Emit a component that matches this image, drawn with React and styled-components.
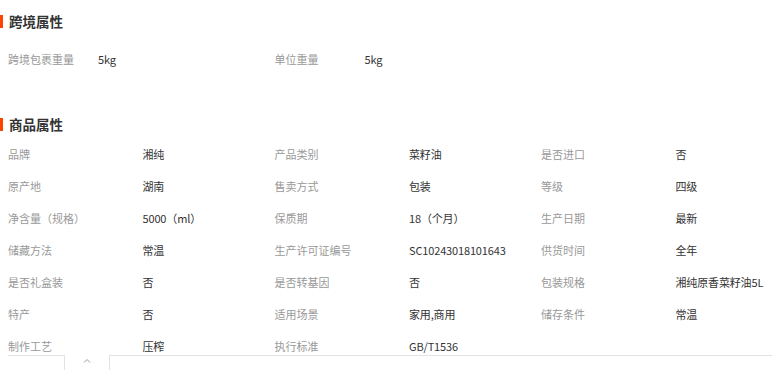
import React from "react";
import styled, { createGlobalStyle } from "styled-components";

const Global = createGlobalStyle`
  html, body { margin: 0; padding: 0; background: #fff; }
  body {
    font-family: "Noto Sans CJK SC", "Liberation Sans", sans-serif;
    font-size: 11px;
    color: #333;
  }
`;

const Page = styled.div`
  width: 800px;
  padding-top: 11px;
`;

const Section = styled.section`
  margin-bottom: ${(p) => p.$gap || 0}px;
`;

const Title = styled.h3`
  margin: 0;
  height: 20px;
  display: flex;
  align-items: center;
  font-size: 13.5px;
  font-weight: 700;
  color: #333;
  &::before {
    content: "";
    display: block;
    width: 3px;
    height: 13px;
    background: #ff4400;
    margin-right: 6px;
  }
`;

const Grid = styled.div`
  display: grid;
  grid-template-columns: repeat(3, 266.5px);
  padding-left: 8px;
  margin-top: ${(p) => p.$top}px;
`;

const Item = styled.div`
  display: flex;
  height: 32px;
  align-items: center;
  white-space: nowrap;
`;

const Label = styled.span`
  width: ${(p) => p.$w}px;
  flex: none;
  color: #999;
`;

const Value = styled.span`
  color: #333;
  letter-spacing: -0.15px;
`;

const Footer = styled.div`
  position: fixed;
  left: 8px;
  right: 0;
  bottom: 0;
  height: 14px;
  border-top: 1px solid #e3e3e3;
  background: #fff;
`;

const Tab = styled.div`
  position: absolute;
  left: 56px;
  top: -1px;
  width: 46px;
  height: 20px;
  background: #fff;
  border-left: 1px solid #e3e3e3;
  border-right: 1px solid #e3e3e3;
  display: flex;
  justify-content: center;
  padding-top: 3px;
  box-sizing: border-box;
`;

const cross = [
  ["跨境包裹重量", "5kg"],
  ["单位重量", "5kg"],
];

const goods = [
  ["品牌", "湘纯"],
  ["产品类别", "菜籽油"],
  ["是否进口", "否"],
  ["原产地", "湖南"],
  ["售卖方式", "包装"],
  ["等级", "四级"],
  ["净含量（规格）", "5000（ml）"],
  ["保质期", "18（个月）"],
  ["生产日期", "最新"],
  ["储藏方法", "常温"],
  ["生产许可证编号", "SC10243018101643"],
  ["供货时间", "全年"],
  ["是否礼盒装", "否"],
  ["是否转基因", "否"],
  ["包装规格", "湘纯原香菜籽油5L"],
  ["特产", "否"],
  ["适用场景", "家用,商用"],
  ["储存条件", "常温"],
  ["制作工艺", "压榨"],
  ["执行标准", "GB/T1536"],
];

export default function App() {
  return (
    <Page>
      <Global />
      <Section $gap={39}>
        <Title>跨境属性</Title>
        <Grid $top={12}>
          {cross.map(([k, v]) => (
            <Item key={k}>
              <Label $w={90}>{k}</Label>
              <Value>{v}</Value>
            </Item>
          ))}
        </Grid>
      </Section>
      <Section>
        <Title>商品属性</Title>
        <Grid $top={4}>
          {goods.map(([k, v]) => (
            <Item key={k}>
              <Label $w={134.5}>{k}</Label>
              <Value>{v}</Value>
            </Item>
          ))}
        </Grid>
      </Section>
      <Footer>
        <Tab>
          <svg width="8" height="5" viewBox="0 0 8 5">
            <path d="M1 4.5 L4 1.5 L7 4.5" fill="none" stroke="#999" strokeWidth="1" />
          </svg>
        </Tab>
      </Footer>
    </Page>
  );
}
